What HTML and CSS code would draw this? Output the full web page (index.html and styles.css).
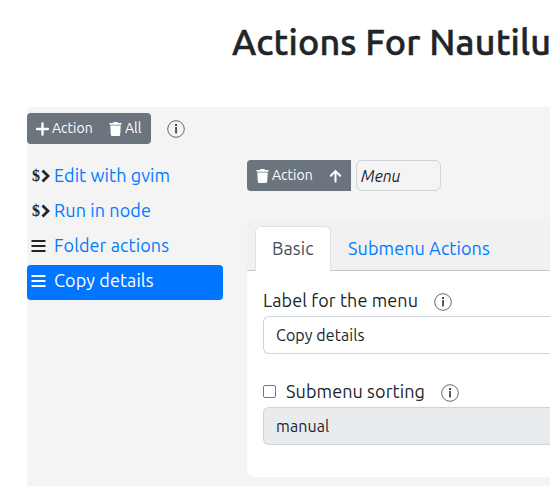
FILE: index.html
```html
<!DOCTYPE html>
<html lang="en">
<head>
<meta charset="utf-8">
<title>Actions For Nautilus</title>
<link rel="stylesheet" href="styles.css">
</head>
<body>
<svg class="defs" aria-hidden="true">
  <symbol id="trash" viewBox="0 0 448 512"><path d="M135 18 128 32H32a32 32 0 0 0 0 64h384a32 32 0 0 0 0-64h-96l-7-14A32 32 0 0 0 284 0H164a32 32 0 0 0-29 18zM416 128H32l21 339a48 48 0 0 0 48 45h246a48 48 0 0 0 48-45z"/></symbol>
  <symbol id="info" viewBox="0 0 18 18"><circle cx="9" cy="9" r="8.300" fill="none" stroke="#65696d" stroke-width="1"/><path d="M8.100 4h1.900v1.900H8.100zM8.200 7h1.700v6.600H8.200z" fill="#2f4552"/></symbol>
  <symbol id="bars" viewBox="0 0 14 14"><path d="M0 1h14v2H0zm0 5h14v2H0zm0 5h14v2H0z"/></symbol>
  <symbol id="chevron" viewBox="0 0 9 14"><path d="M1.500 1.500 7 7l-5.500 5.500" fill="none" stroke="currentColor" stroke-width="2.800"/></symbol>
</svg>
<h1 class="title">Actions For Nautilus</h1>
<main class="editor">
  <div class="toolbar">
    <div class="group">
      <button class="btn"><svg class="ic" viewBox="0 0 13 13"><path d="M6.500 1v11M1 6.500h11" stroke="#fff" stroke-width="2.400" stroke-linecap="round"/></svg><span>Action</span></button>
      <button class="btn btn-all"><svg class="ic"><use href="#trash"/></svg><span>All</span></button>
    </div>
    <svg class="info"><use href="#info"/></svg>
  </div>
  <div class="columns">
    <nav class="list">
      <a class="item"><span class="mark"><b>$</b><svg class="chev"><use href="#chevron"/></svg></span><span>Edit with gvim</span></a>
      <a class="item"><span class="mark"><b>$</b><svg class="chev"><use href="#chevron"/></svg></span><span>Run in node</span></a>
      <a class="item"><span class="mark"><svg class="bars"><use href="#bars"/></svg></span><span>Folder actions</span></a>
      <a class="item active"><span class="mark"><svg class="bars"><use href="#bars"/></svg></span><span>Copy details</span></a>
    </nav>
    <section class="detail">
      <div class="controls">
        <div class="group open">
          <button class="btn"><svg class="ic"><use href="#trash"/></svg><span>Action</span></button>
          <button class="btn btn-up"><svg class="ic" viewBox="0 0 13 13"><path d="M6.500 12V2M1.800 6.300l4.700-4.700 4.700 4.700" fill="none" stroke="#fff" stroke-width="2" stroke-linecap="round"/></svg></button>
        </div>
        <div class="type">Menu</div>
      </div>
      <div class="card">
        <div class="tabs">
          <a class="tab selected">Basic</a>
          <a class="tab">Submenu Actions</a>
        </div>
        <div class="fields">
          <div class="label"><span>Label for the menu</span><svg class="info"><use href="#info"/></svg></div>
          <div class="input">Copy details</div>
          <div class="label sorting"><span class="check"></span><span>Submenu sorting</span><svg class="info"><use href="#info"/></svg></div>
          <div class="input disabled">manual</div>
        </div>
      </div>
    </section>
  </div>
</main>
</body>
</html>
```
FILE: styles.css
```css
* { box-sizing: border-box; }
html, body { margin: 0; height: 486px; overflow: hidden; }
body { background: #fff; color: #212529; font: 18px/26px Ubuntu, "Noto Sans", sans-serif; letter-spacing: 0.090px; white-space: nowrap; }
.defs { display: none; }
.title { margin: 0; padding: 19px 0 0 232px; height: 107px; font-size: 36px; line-height: 46px; font-weight: 500; letter-spacing: 0.170px; -webkit-text-stroke: 0.500px #212529; }
.editor { margin-left: 27px; width: 523px; height: 400px; background: #f4f4f4; border-radius: 6px 0 0 0; padding-top: 6px; }
.toolbar { display: flex; align-items: center; height: 31px; gap: 16px; }
.group { display: flex; height: 31px; border-radius: 4px; background: #6c757d; }
.group.open { border-radius: 4px 0 0 4px; }
.btn { display: flex; align-items: center; gap: 3px; width: 74px; padding: 0 0 0 9px; border: 0; background: none; color: #fff; font: 14px/21px Ubuntu, "Noto Sans", sans-serif; white-space: nowrap; }
.btn-all { width: 50px; padding-left: 8px; }
.btn-up { width: 30px; padding-left: 8px; }
.ic { width: 13px; height: 14px; fill: #fff; flex: none; }
.info { width: 18px; height: 18px; flex: none; }
.columns { display: flex; gap: 24px; margin-top: 16px; }
.list { width: 196px; }
.item { display: flex; align-items: center; height: 35px; padding: 0 0 6px 4px; color: #007bff; border-radius: 4px; }
.mark { display: flex; align-items: center; width: 23px; color: #212529; padding-top: 3px; }
.mark b { font: bold 16px/16px "Liberation Serif", serif; width: 9px; letter-spacing: 0; margin-left: 1px; }
.chev { width: 9px; height: 14px; }
.bars { width: 15px; height: 14px; fill: currentColor; }
.active { background: #0075ff; }
.active, .active .mark { color: #fff; }
.detail { width: 303px; }
.controls { display: flex; gap: 5px; height: 31px; }
.type { width: 85px; border: 1px solid #ced4da; border-radius: 6px; padding-left: 4px; font-size: 16px; line-height: 31px; font-style: italic; }
.card { margin-top: 27px; height: 259px; background: #fff; border-radius: 6px 0 0 6px; }
.tabs { display: flex; height: 53px; padding: 8px 0 0 8px; background: #f1f1f1; border-bottom: 1px solid #c6c6c6; border-radius: 6px 0 0 0; }
.tab { height: 45px; padding: 8px 16px 0; border: 1px solid transparent; border-bottom: 0; color: #007bff; }
.selected { width: 76px; background: #fff; border-color: #dee2e6; border-radius: 6px 6px 0 0; color: #495057; }
.fields { padding: 16px 0 0 16px; }
.label { display: flex; align-items: center; height: 29px; gap: 16px; padding-bottom: 4px; }
.label .info { margin-top: 5px; }
.input { height: 38px; border: 1px solid #ced4da; border-right: 0; border-radius: 6px 0 0 6px; padding-left: 12px; line-height: 36px; font-size: 16px; background: #fff; }
.disabled { background: #e9ecef; }
.sorting { margin-top: 24px; gap: 10px; }
.sorting .info { margin-left: 6px; }
.check { width: 13px; height: 13px; margin-top: 2px; border: 1px solid #767676; border-radius: 2px; }
```
